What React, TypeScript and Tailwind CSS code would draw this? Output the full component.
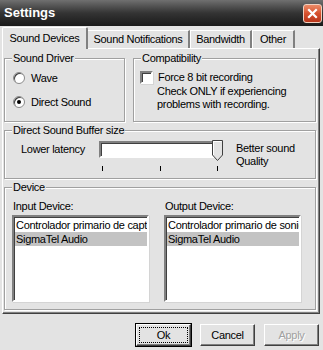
import React from "react";

const Group = ({ label, className, children }: { label: string; className: string; children?: React.ReactNode }) => (
    <div className={`relative border border-[#a0a0a0] shadow-[inset_1px_1px_0_#fff,1px_1px_0_#fff] ${className}`}>
        <span className="absolute -top-[8px] left-[7px] bg-[#e3e3e3] px-[1px] leading-[14px] whitespace-nowrap">{label}</span>
        {children}
    </div>
);

const Radio = ({ checked, label }: { checked?: boolean; label: string }) => (
    <div className="flex items-center gap-[6px] h-[14px]">
        <span className="w-[12px] h-[12px] rounded-full bg-white border border-[#8a8a8a] shadow-[inset_1px_1px_0_#404040] flex items-center justify-center">
            {checked && <span className="w-[4px] h-[4px] rounded-full bg-black" />}
        </span>
        <span>{label}</span>
    </div>
);

const ListBox = ({ first }: { first: string }) => (
    <div className="w-[137px] h-[87px] bg-white border-2 border-t-[#808080] border-l-[#808080] border-b-white border-r-white shadow-[inset_1px_1px_0_#404040,1px_1px_0_#d4d4d4] pt-[1px] pl-[1px] overflow-hidden">
        <div className="h-[14px] leading-[14px] whitespace-nowrap overflow-hidden pl-[1px]">{first}</div>
        <div className="h-[14px] leading-[14px] whitespace-nowrap overflow-hidden pl-[1px] bg-[#c3c3c3]">SigmaTel Audio</div>
    </div>
);

const Button = ({ label, def, disabled }: { label: string; def?: boolean; disabled?: boolean }) => (
    <button className={`w-[57px] h-[24px] bg-[#e3e3e3] border ${def ? 'border-black' : 'border-transparent'} p-0`}>
        <div className="w-full h-full border border-t-white border-l-white border-b-[#404040] border-r-[#404040] shadow-[inset_-1px_-1px_0_#808080] flex items-center justify-center p-[2px]">
            {def ? (
                <div className="w-full h-full border border-dotted border-black flex items-center justify-center">{label}</div>
            ) : disabled ? (
                <span className="text-[#a0a0a0] [text-shadow:1px_1px_0_#fff]">{label}</span>
            ) : (
                <span>{label}</span>
            )}
        </div>
    </button>
);

export default function App() {
    const tabs = ['Sound Notifications', 'Bandwidth', 'Other'];
    return (
        <div className="w-[323px] h-[350px] bg-[#e3e3e3] text-black text-[11px] tracking-[-0.3px] overflow-hidden" style={{ fontFamily: '"Liberation Sans", Arial, sans-serif' }}>
            {/* title bar */}
            <div className="h-[26px] flex items-center justify-between pl-[4px] pr-[1px] bg-gradient-to-b from-[#707070] via-[#343434] to-[#1a1a1a]">
                <span className="text-white font-bold text-[13px] tracking-normal">Settings</span>
                <div className="w-[19px] h-[19px] rounded-[3px] border border-[#f0d0c0] bg-gradient-to-b from-[#ec8a66] via-[#d6512e] to-[#b8351a] flex items-center justify-center">
                    <svg width="11" height="11" viewBox="0 0 11 11">
                        <path d="M2 2 L9 9 M9 2 L2 9" stroke="white" strokeWidth="2.2" strokeLinecap="square" />
                    </svg>
                </div>
            </div>

            {/* tabs */}
            <div className="flex items-end h-[22px] pl-[2px] pt-[1px] whitespace-nowrap">
                <div className="relative z-10 -mb-[1px] h-[22px] w-[86px] bg-[#e3e3e3] border-t border-l border-white border-r-2 border-r-[#808080] rounded-t-[2px] flex items-center justify-center">
                    Sound Devices
                </div>
                {tabs.map((t, i) => (
                    <div key={t} className={`h-[18px] border-t border-white ${i === 0 ? '' : 'border-l'} border-r-2 border-r-[#808080] flex items-center justify-center ${i === 0 ? 'w-[102px]' : i === 1 ? 'w-[62px]' : 'w-[43px]'}`}>
                        {t}
                    </div>
                ))}
            </div>

            {/* tab panel */}
            <div className="ml-[2px] w-[318px] h-[266px] border-t border-l border-white border-r border-b border-r-[#404040] border-b-[#404040] shadow-[inset_-1px_-1px_0_#808080] pl-[1px] pt-[9px] flex flex-col gap-[8px]">
                <div className="flex gap-[8px] h-[64px]">
                    <Group label="Sound Driver" className="w-[121px] h-[64px] pl-[8px] pt-[12px] flex flex-col gap-[10px]">
                        <Radio label="Wave" />
                        <Radio label="Direct Sound" checked />
                    </Group>
                    <Group label="Compatibility" className="w-[183px] h-[64px] pl-[6px] pt-[12px]">
                        <div className="flex gap-[5px]">
                            <span className="w-[13px] h-[13px] bg-white border-2 border-t-[#808080] border-l-[#808080] border-b-white border-r-white shadow-[inset_1px_1px_0_#404040,1px_1px_0_#d4d4d4] shrink-0" />
                            <div className="leading-[13px]">
                                <div>Force 8 bit recording</div>
                                <div className="-ml-[1px] pt-[1px]">Check ONLY if experiencing</div>
                                <div className="-ml-[1px]">problems with recording.</div>
                            </div>
                        </div>
                    </Group>
                </div>

                <Group label="Direct Sound Buffer size" className="w-[312px] h-[49px] pl-[16px] pt-[10px] flex">
                    <span className="w-[78px] leading-[14px] pt-[1px]">Lower latency</span>
                    <div className="relative w-[124px]">
                        <div className="w-[120px] h-[17px] bg-white border-2 border-t-[#808080] border-l-[#808080] border-b-white border-r-white shadow-[inset_1px_1px_0_#404040]" />
                        <svg className="absolute left-[113px] -top-[1px]" width="11" height="21" viewBox="0 0 11 21">
                            <path d="M0.5 0.5 H10.5 V15 L5.5 20.5 L0.5 15 Z" fill="#e3e3e3" stroke="#404040" />
                            <path d="M1.5 15 V1.5 H9.5" fill="none" stroke="#fff" />
                        </svg>
                        <div className="flex justify-between w-[116px] ml-[3px] mt-[8px]">
                            <span className="w-[1px] h-[5px] bg-black" />
                            <span className="w-[1px] h-[5px] bg-black" />
                            <span className="w-[1px] h-[5px] bg-black" />
                        </div>
                    </div>
                    <div className="pl-[13px] leading-[13px] pt-[1px]">
                        <div>Better sound</div>
                        <div>Quality</div>
                    </div>
                </Group>

                <Group label="Device" className="w-[312px] h-[123px] pl-[7px] pt-[11px] flex gap-[15px]">
                    <div className="flex flex-col gap-[2px]">
                        <span className="leading-[14px] pl-[1px]">Input Device:</span>
                        <ListBox first="Controlador primario de captura" />
                    </div>
                    <div className="flex flex-col gap-[2px]">
                        <span className="leading-[14px] pl-[1px]">Output Device:</span>
                        <ListBox first="Controlador primario de sonido" />
                    </div>
                </Group>
            </div>

            {/* buttons */}
            <div className="flex justify-end gap-[7px] pr-[3px] pt-[9px]">
                <Button label="Ok" def />
                <Button label="Cancel" />
                <Button label="Apply" disabled />
            </div>
        </div>
    );
}
